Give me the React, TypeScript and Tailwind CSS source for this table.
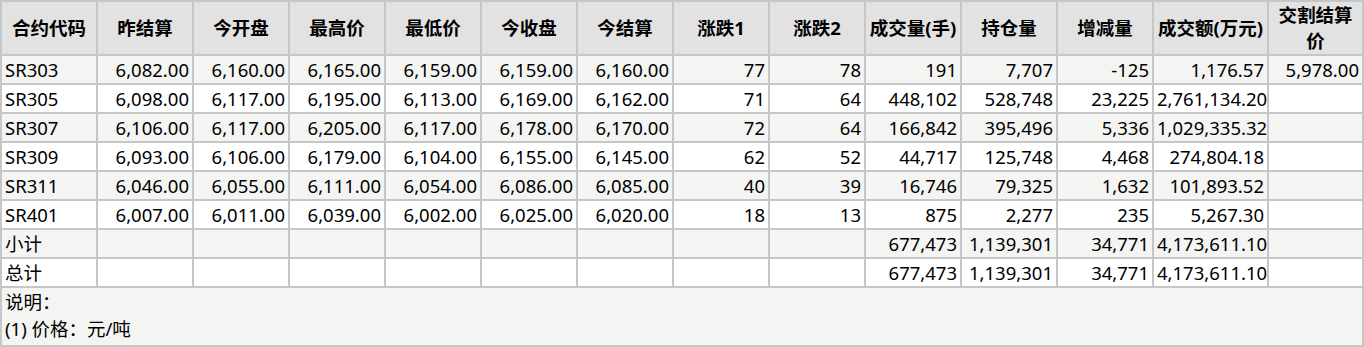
import React from 'react';

const headers = [
  '合约代码', '昨结算', '今开盘', '最高价', '最低价', '今收盘', '今结算',
  '涨跌1', '涨跌2', '成交量(手)', '持仓量', '增减量', '成交额(万元)', '交割结算价',
];

const rows: string[][] = [
  ['SR303', '6,082.00', '6,160.00', '6,165.00', '6,159.00', '6,159.00', '6,160.00', '77', '78', '191', '7,707', '-125', '1,176.57', '5,978.00'],
  ['SR305', '6,098.00', '6,117.00', '6,195.00', '6,113.00', '6,169.00', '6,162.00', '71', '64', '448,102', '528,748', '23,225', '2,761,134.20', ''],
  ['SR307', '6,106.00', '6,117.00', '6,205.00', '6,117.00', '6,178.00', '6,170.00', '72', '64', '166,842', '395,496', '5,336', '1,029,335.32', ''],
  ['SR309', '6,093.00', '6,106.00', '6,179.00', '6,104.00', '6,155.00', '6,145.00', '62', '52', '44,717', '125,748', '4,468', '274,804.18', ''],
  ['SR311', '6,046.00', '6,055.00', '6,111.00', '6,054.00', '6,086.00', '6,085.00', '40', '39', '16,746', '79,325', '1,632', '101,893.52', ''],
  ['SR401', '6,007.00', '6,011.00', '6,039.00', '6,002.00', '6,025.00', '6,020.00', '18', '13', '875', '2,277', '235', '5,267.30', ''],
  ['小计', '', '', '', '', '', '', '', '', '677,473', '1,139,301', '34,771', '4,173,611.10', ''],
  ['总计', '', '', '', '', '', '', '', '', '677,473', '1,139,301', '34,771', '4,173,611.10', ''],
];

const cols =
  'grid-cols-[96px_96px_96px_96px_96px_96px_96px_96px_96px_96px_96px_96px_115px_97px]';

function Cell({ children, last, left, bg }: { children: React.ReactNode; last: boolean; left: boolean; bg: string }) {
  return (
    <div
      className={`h-[29px] border-t-2 border-l-2 border-[#c6c6c6] px-[3px] leading-[27px] whitespace-nowrap overflow-visible ${bg} ${
        last ? 'border-r-2' : ''
      } ${left ? 'text-left' : 'text-right'}`}
    >
      {children}
    </div>
  );
}

export default function App() {
  return (
    <div
      className="w-[1364px] h-[347px] bg-white text-black text-[18.5px]"
      style={{ fontFamily: '"Noto Sans", "Noto Sans CJK SC", sans-serif' }}
    >
      <div className={`grid ${cols}`}>
        {headers.map((h, i) => {
          const last = i === headers.length - 1;
          return (
            <div
              key={h}
              className={`h-[54px] flex items-center justify-center text-center font-bold bg-[#e2e2e2] border-t-2 border-l-2 border-[#c6c6c6] leading-[26px] ${
                last ? 'border-r-2 px-[4px]' : 'px-0 whitespace-nowrap'
              }`}
            >
              {h}
            </div>
          );
        })}
        {rows.map((r, ri) =>
          r.map((v, ci) => (
            <Cell
              key={`${ri}-${ci}`}
              last={ci === r.length - 1}
              left={ci === 0}
              bg={ri % 2 === 0 ? 'bg-[#f4f4f2]' : 'bg-white'}
            >
              {v}
            </Cell>
          ))
        )}
      </div>
      <div className="h-[61px] bg-[#f4f4f2] border-2 border-[#c6c6c6] px-[3px] leading-[27px]">
        <div>说明：</div>
        <div>(1) 价格：元/吨</div>
      </div>
    </div>
  );
}
